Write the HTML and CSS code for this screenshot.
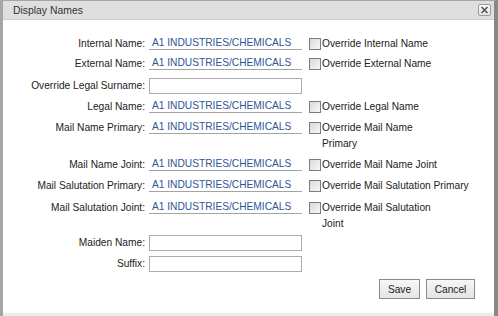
FILE: index.html
```html
<!DOCTYPE html>
<html>
<head>
<meta charset="utf-8">
<title>Display Names</title>
<link rel="stylesheet" href="styles.css">
</head>
<body>
<div class="dialog">
  <div class="titlebar">
    <span class="title">Display Names</span>
    <span class="close"><svg width="11" height="10" viewBox="0 0 11 10"><path d="M2.5 2 L8.5 8 M8.5 2 L2.5 8" stroke="#555" stroke-width="1.6" fill="none"/></svg></span>
  </div>
  <div class="body">
    <div class="form">
      <div class="label">Internal Name:</div>
      <div class="value">A1 INDUSTRIES/CHEMICALS</div>
      <div class="check"><span class="box"></span><span class="clabel">Override Internal Name</span></div>

      <div class="label">External Name:</div>
      <div class="value">A1 INDUSTRIES/CHEMICALS</div>
      <div class="check"><span class="box"></span><span class="clabel">Override External Name</span></div>

      <div class="label">Override Legal Surname:</div>
      <div class="inputcell"><span class="input"></span></div>
      <div class="check"></div>

      <div class="label">Legal Name:</div>
      <div class="value">A1 INDUSTRIES/CHEMICALS</div>
      <div class="check"><span class="box"></span><span class="clabel">Override Legal Name</span></div>

      <div class="label">Mail Name Primary:</div>
      <div class="value">A1 INDUSTRIES/CHEMICALS</div>
      <div class="check"><span class="box"></span><span class="clabel">Override Mail Name<br>Primary</span></div>

      <div class="label">Mail Name Joint:</div>
      <div class="value">A1 INDUSTRIES/CHEMICALS</div>
      <div class="check"><span class="box"></span><span class="clabel">Override Mail Name Joint</span></div>

      <div class="label">Mail Salutation Primary:</div>
      <div class="value">A1 INDUSTRIES/CHEMICALS</div>
      <div class="check"><span class="box"></span><span class="clabel">Override Mail Salutation Primary</span></div>

      <div class="label">Mail Salutation Joint:</div>
      <div class="value">A1 INDUSTRIES/CHEMICALS</div>
      <div class="check"><span class="box"></span><span class="clabel">Override Mail Salutation<br>Joint</span></div>

      <div class="label">Maiden Name:</div>
      <div class="inputcell"><span class="input"></span></div>
      <div class="check"></div>

      <div class="label">Suffix:</div>
      <div class="inputcell"><span class="input"></span></div>
      <div class="check"></div>
    </div>
    <div class="actions">
      <button class="btn btn-save">Save</button>
      <button class="btn btn-cancel">Cancel</button>
    </div>
  </div>
</div>
</body>
</html>
```
FILE: styles.css
```css
html, body {
  margin: 0;
  padding: 0;
}
body {
  width: 498px;
  height: 316px;
  overflow: hidden;
  font-family: "Liberation Sans", Arial, sans-serif;
  font-size: 10.2px;
  color: #222;
  background: #fff;
}
.dialog {
  width: 498px;
  height: 316px;
  box-sizing: border-box;
  border-left: 3px solid #a6a6a6;
  border-right: 4px solid #888;
  border-top: 1px solid #a6a6a6;
  background: #ececec;
  display: flex;
  flex-direction: column;
}
.titlebar {
  height: 18px;
  flex: none;
  background: #dfdfdf;
  border-bottom: 1px solid #cfcfcf;
  display: flex;
  align-items: center;
  justify-content: space-between;
  padding: 0 3px 0 10px;
}
.title {
  color: #333;
  font-size: 10.4px;
}
.close {
  width: 11px;
  height: 10px;
  border: 1px solid #9a9a9a;
  border-radius: 2px;
  background: linear-gradient(#fafafa, #e6e6e6);
  display: flex;
  align-items: center;
  justify-content: center;
}
.close svg {
  display: block;
}
.body {
  height: 293px;
  flex: none;
  box-sizing: border-box;
  background: #fff;
  padding-top: 17px;
}
.form {
  display: grid;
  grid-template-columns: 146px 153px 1fr;
  grid-template-rows: 20px 22px 21px 21px 37px 21px 22px 35px 21px 22px;
  align-items: start;
}
.label {
  text-align: right;
  padding-right: 4px;
  line-height: 14px;
  white-space: nowrap;
}
.value {
  height: 12px;
  line-height: 12px;
  border-bottom: 1px solid #a3a3a3;
  padding-left: 3px;
  color: #2f5597;
  white-space: nowrap;
}
.inputcell {
  margin-top: -1px;
}
.input {
  display: block;
  height: 14px;
  border: 1px solid #ababab;
  background: #fff;
}
.check {
  display: flex;
  align-items: flex-start;
  padding-left: 7px;
}
.box {
  flex: none;
  width: 10px;
  height: 10px;
  margin-top: 1px;
  border: 1px solid #7c7c7c;
  background: linear-gradient(135deg, #dadada, #f7f7f7);
}
.clabel {
  margin-left: 1px;
  margin-top: -1px;
  line-height: 16px;
  white-space: nowrap;
}
.actions {
  display: flex;
  justify-content: flex-end;
  gap: 6px;
  padding-right: 19px;
}
.btn {
  height: 20px;
  box-sizing: border-box;
  margin: 0;
  padding: 0;
  font-family: "Liberation Sans", Arial, sans-serif;
  font-size: 10.2px;
  color: #222;
  border: 1px solid #8a8a8a;
  border-radius: 0;
  background: linear-gradient(#f7f7f7, #e4e4e4);
}
.btn-save {
  width: 41px;
}
.btn-cancel {
  width: 49px;
}
```
